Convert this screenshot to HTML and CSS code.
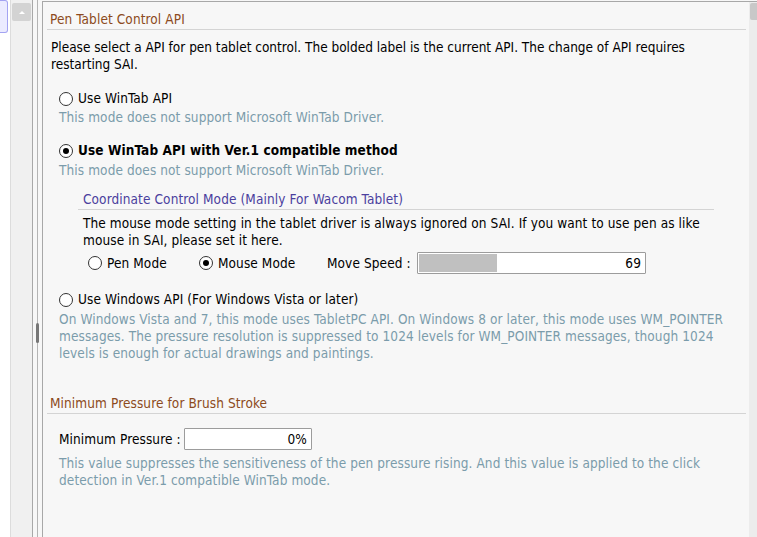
FILE: index.html
```html
<!DOCTYPE html>
<html>
<head>
<meta charset="utf-8">
<link rel="stylesheet" href="styles.css">
</head>
<body>
<div class="tree"><div class="tree-item"></div></div>
<div class="tree-scroll"><div class="scroll-up"><span class="tri"></span></div></div>
<div class="splitter"><div class="split-line"></div><div class="grip"></div></div>
<div class="pane">
  <div class="content">
    <section class="group">
      <div class="group-title">Pen Tablet Control API</div>
      <p class="intro">Please select a API for pen tablet control. The bolded label is the current API. The change of API requires<br>restarting SAI.</p>

      <div class="option first">
        <div class="radio"><span class="rb"></span><span>Use WinTab API</span></div>
        <div class="desc">This mode does not support Microsoft WinTab Driver.</div>
      </div>

      <div class="option">
        <div class="radio current"><span class="rb on"></span><span>Use WinTab API with Ver.1 compatible method</span></div>
        <div class="desc">This mode does not support Microsoft WinTab Driver.</div>
        <div class="subgroup">
          <div class="sub-title">Coordinate Control Mode (Mainly For Wacom Tablet)</div>
          <p class="sub-text">The mouse mode setting in the tablet driver is always ignored on SAI. If you want to use pen as like<br>mouse in SAI, please set it here.</p>
          <div class="mode-row">
            <div class="radio pen"><span class="rb"></span><span>Pen Mode</span></div>
            <div class="radio mouse"><span class="rb on"></span><span>Mouse Mode</span></div>
            <span class="speed-label">Move Speed :</span>
            <div class="slider"><div class="slider-fill" style="width:78px"></div><span class="slider-val">69</span></div>
          </div>
        </div>
      </div>

      <div class="option third">
        <div class="radio"><span class="rb"></span><span>Use Windows API (For Windows Vista or later)</span></div>
        <div class="desc">On Windows Vista and 7, this mode uses TabletPC API. On Windows 8 or later, this mode uses WM_POINTER<br>messages. The pressure resolution is suppressed to 1024 levels for WM_POINTER messages, though 1024<br>levels is enough for actual drawings and paintings.</div>
      </div>
    </section>

    <section class="group second">
      <div class="group-title">Minimum Pressure for Brush Stroke</div>
      <div class="pressure-row">
        <span class="pressure-label">Minimum Pressure :</span>
        <div class="field">0%</div>
      </div>
      <div class="desc pressure-desc">This value suppresses the sensitiveness of the pen pressure rising. And this value is applied to the click<br>detection in Ver.1 compatible WinTab mode.</div>
    </section>
  </div>
  <div class="vscroll"><div class="vthumb"></div></div>
</div>
</body>
</html>
```

FILE: styles.css
```css
html, body {
  margin: 0;
  padding: 0;
}
body {
  width: 757px;
  height: 537px;
  overflow: hidden;
  display: flex;
  background: #f7f7f7;
  font-family: "DejaVu Sans Condensed", "DejaVu Sans", sans-serif;
  font-stretch: condensed;
  font-size: 13.5px;
  letter-spacing: 0.1px;
  line-height: 17px;
  color: #000;
}
p { margin: 0; }

/* left tree */
.tree {
  width: 10px;
  background: #fff;
  border-right: 1px solid #dcdcdc;
}
.tree-item {
  width: 8px;
  height: 33px;
  box-sizing: border-box;
  background: #ebebff;
  border: 1px solid #a3a3f2;
  border-left: none;
  border-radius: 0 3px 3px 0;
}
.tree-scroll {
  width: 21px;
  background: #f0f0f0;
  border-right: 1px solid #a8a8a8;
}
.scroll-up {
  margin: 3px 1px 0 1px;
  height: 18px;
  background: #d3d3d3;
  border-radius: 2px;
  display: flex;
  justify-content: center;
  align-items: center;
}
.tri {
  width: 0;
  height: 0;
  border-left: 3px solid transparent;
  border-right: 3px solid transparent;
  border-bottom: 3px solid #fff;
}
.splitter {
  width: 9px;
  position: relative;
  background: #f7f7f7;
}
.split-line {
  margin-left: 4px;
  width: 1px;
  height: 100%;
  background: #b4b4b4;
}
.grip {
  position: absolute;
  left: 3px;
  top: 323px;
  width: 3px;
  height: 20px;
  background: #777;
  border-radius: 2px;
}

/* main pane */
.pane {
  flex: 1;
  margin-top: 1px;
  border-top: 1px solid #a8a8a8;
  border-left: 1px solid #a8a8a8;
  display: flex;
}
.content {
  flex: 1;
  background: #f7f7f7;
}
.vscroll {
  width: 8px;
  background: #ececec;
}
.vthumb {
  margin-top: 1px;
  margin-left: 1px;
  height: 17px;
  background: #c8c8c8;
  border-radius: 2px 0 0 2px;
}

.group-title {
  margin: 9px 3px 0 4px;
  padding: 0 0 1px 3px;
  border-bottom: 1px solid #d4d4d4;
  color: #8c4a20;
}
.intro {
  margin: 9px 0 0 8px;
  letter-spacing: 0;
}
.option {
  margin: 16px 0 0 16px;
}
.option.first { margin-top: 17px; }
.radio {
  display: flex;
  align-items: center;
  height: 17px;
}
.rb {
  width: 14px;
  height: 14px;
  box-sizing: border-box;
  border: 1px solid #333;
  border-radius: 50%;
  background: #fff;
  margin-right: 5px;
  flex-shrink: 0;
  display: flex;
  align-items: center;
  justify-content: center;
}
.rb.on::after {
  content: "";
  width: 6px;
  height: 6px;
  border-radius: 50%;
  background: #000;
}
.current { font-weight: bold; }
.desc {
  margin-top: 2px;
  color: #7b9cab;
}
.option + .option .desc { margin-top: 3px; }
.third .desc { margin-top: 5px; }
.option.third { margin-top: 17px; }

.subgroup {
  margin: 12px 35px 0 19px;
}
.sub-title {
  padding: 0 0 1px 5px;
  border-bottom: 1px solid #d4d4d4;
  color: #4b3f9e;
}
.sub-text {
  margin: 5px 0 0 5px;
}
.mode-row {
  margin: 3px 0 0 10px;
  display: flex;
  align-items: center;
  height: 22px;
}
.pen { width: 111px; }
.mouse { width: 128px; }
.speed-label { width: 90px; }
.slider {
  position: relative;
  width: 229px;
  height: 22px;
  box-sizing: border-box;
  border: 1px solid #9c9c9c;
  border-radius: 1px;
  background: #fff;
  padding: 1px;
  display: flex;
  align-items: stretch;
}
.slider-fill {
  background: #c0c0c0;
}
.slider-val {
  position: absolute;
  right: 4px;
  top: 2px;
}

.second .group-title {
  margin-top: 33px;
}
.pressure-row {
  margin: 14px 0 0 16px;
  display: flex;
  align-items: center;
  height: 22px;
}
.pressure-label { width: 125px; }
.field {
  width: 128px;
  height: 22px;
  box-sizing: border-box;
  border: 1px solid #9c9c9c;
  border-radius: 1px;
  background: #fff;
  text-align: right;
  padding: 2px 4px 0 0;
}
.pressure-desc {
  margin: 5px 0 0 16px;
}
```
